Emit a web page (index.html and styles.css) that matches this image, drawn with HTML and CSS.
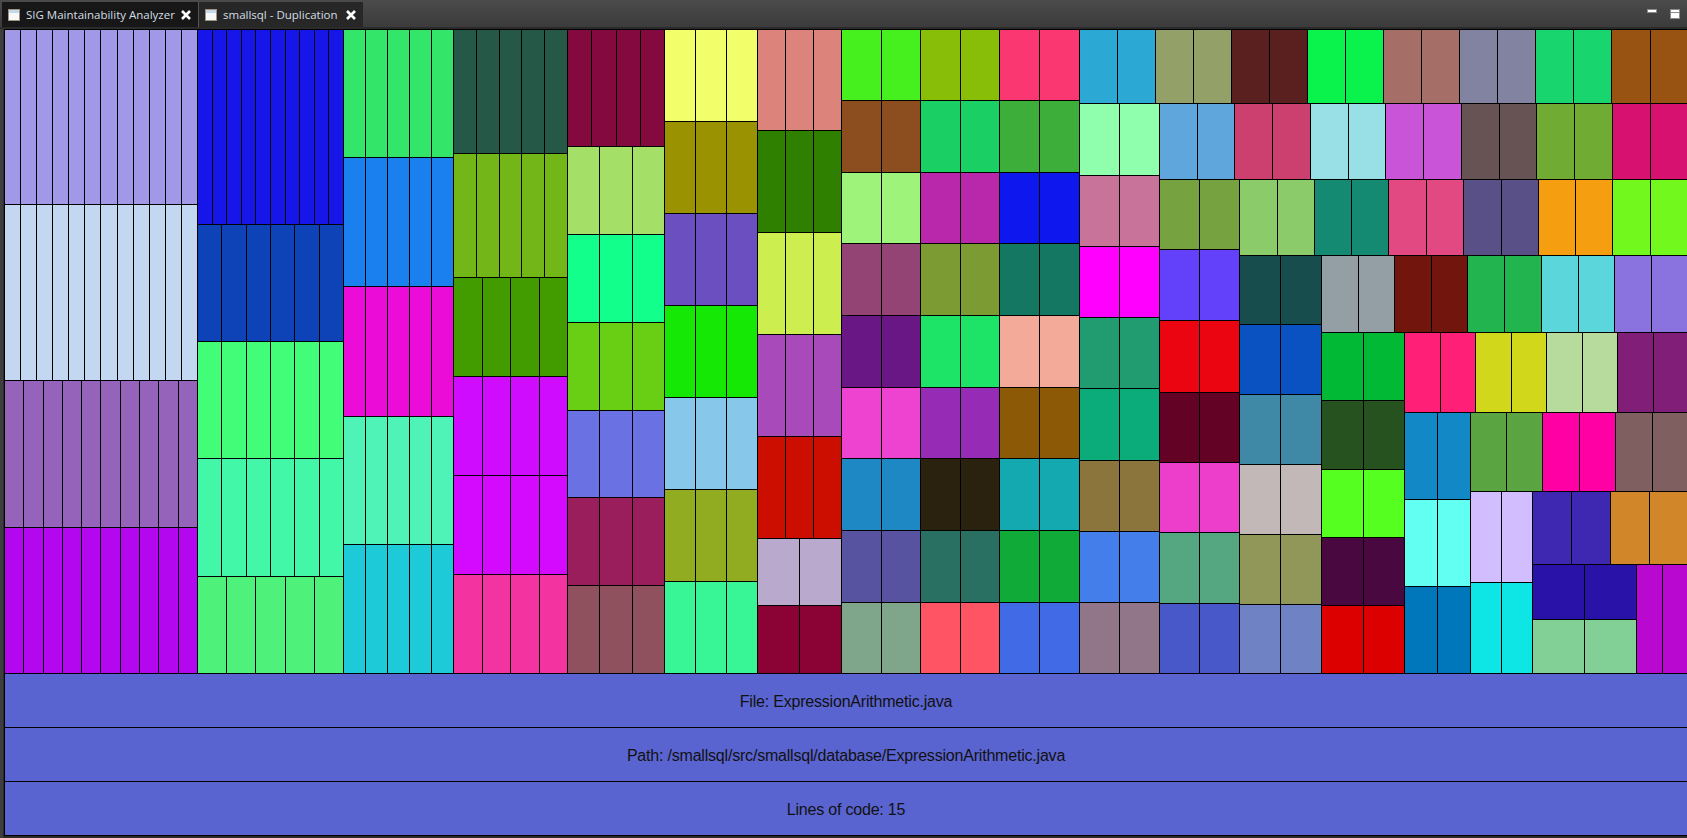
FILE: index.html
```html
<!DOCTYPE html>
<html lang="en">
<head>
  <meta charset="UTF-8">
  <title>smallsql - Duplication</title>
  <link rel="stylesheet" href="styles.css">
</head>
<body>

  <div class="tabbar">
    <div class="tab tab-first">
      <svg class="tab-icon" viewBox="0 0 12 12"><rect x="0" y="0" width="12" height="12" fill="#a0957c"/><rect x="1" y="1" width="10" height="3" fill="#c4d9ee"/><rect x="1" y="4" width="10" height="7" fill="#f6f8fa"/></svg>
      <span class="tab-title">SIG Maintainability Analyzer</span>
      <svg class="tab-close" viewBox="0 0 10 10"><path d="M1 1 L9 9 M9 1 L1 9" stroke="#fff" stroke-width="2.6"/></svg>
    </div>
    <div class="tab tab-second">
      <svg class="tab-icon" viewBox="0 0 12 12"><rect x="0" y="0" width="12" height="12" fill="#a0957c"/><rect x="1" y="1" width="10" height="3" fill="#c4d9ee"/><rect x="1" y="4" width="10" height="7" fill="#f6f8fa"/></svg>
      <span class="tab-title">smallsql - Duplication</span>
      <svg class="tab-close" viewBox="0 0 10 10"><path d="M1 1 L9 9 M9 1 L1 9" stroke="#fff" stroke-width="2.6"/></svg>
    </div>
    <div class="window-buttons">
      <span class="btn-min"></span>
      <span class="btn-max"></span>
    </div>
  </div>

  <div class="content">
    <div id="treemap" class="treemap"></div>
    <div class="info">
      <div class="info-row">File: ExpressionArithmetic.java</div>
      <div class="info-row">Path: /smallsql/src/smallsql/database/ExpressionArithmetic.java</div>
      <div class="info-row">Lines of code: 15</div>
    </div>
  </div>

  <script src="treemap.js"></script>
</body>
</html>
```

FILE: styles.css
```css
html, body {
  margin: 0;
  height: 100%;
  overflow: hidden;
  background-color: #2b2b2b;
}

.tabbar {
  display: flex;
  align-items: flex-start;
  box-sizing: border-box;
  height: 29px;
  padding: 2px 0 0 2px;
  border-bottom: 2px solid #2b2b2b;
  background: linear-gradient(#4b4b4b, #3b3b3b);
}

.tab {
  display: flex;
  align-items: center;
  box-sizing: border-box;
  height: 25px;
  padding: 0 7px 0 6px;
  font-family: "Open Sans", sans-serif;
  font-size: 11.5px;
  color: #d4dde4;
}

.tab-first {
  width: 197px;
  background-color: #171717;
  border-right: 1px solid #555;
}

.tab-second {
  width: 164px;
  background-color: #272727;
}

.tab-icon {
  width: 12px;
  height: 12px;
  margin-right: 6px;
  flex: none;
}

.tab-title {
  white-space: nowrap;
}

.tab-close {
  width: 10px;
  height: 10px;
  margin-left: auto;
  flex: none;
}

.window-buttons {
  display: flex;
  align-items: flex-start;
  gap: 13px;
  margin-left: auto;
  padding: 7px 7px 0 0;
}

.btn-min {
  box-sizing: border-box;
  width: 10px;
  height: 4px;
  background-color: #fff;
  border: 1px solid #8a8a8a;
}

.btn-max {
  box-sizing: border-box;
  width: 10px;
  height: 10px;
  background: linear-gradient(#fff 2px, #8a8a8a 2px, #8a8a8a 3px, #fff 3px);
  border: 1px solid #8a8a8a;
}

.content {
  box-sizing: border-box;
  padding-left: 1px;
  border-left: 3px solid #3e3e3e;
  height: 809px;
}

.treemap {
  display: flex;
  height: 644px;
  margin-right: -1px;
  border-top: 1px solid #000;
  border-left: 1px solid #000;
}

.node {
  display: flex;
  flex: none;
}

.row {
  flex-direction: row;
}

.col {
  flex-direction: column;
}

.cell {
  flex: 1 1 0;
  min-width: 0;
  border-right: 1px solid #000;
  border-bottom: 1px solid #000;
}

.info {
  border-left: 1px solid #000;
}

.info-row {
  display: flex;
  align-items: center;
  justify-content: center;
  box-sizing: border-box;
  height: 54px;
  padding-top: 2px;
  background-color: #5a64d0;
  border-bottom: 1px solid #000;
  font-family: "Liberation Sans", Arial, sans-serif;
  font-size: 16px;
  letter-spacing: -0.2px;
  color: #111;
}
```

FILE: treemap.js
```js
// [size, cells, colour] is a block, ["row"|"col", size, kids] is a group
const tree = [
  ["col", 193, [[175, 12, "#a298e8"], [176, 12, "#c3d7f0"], [147, 10, "#9663bb"], [146, 10, "#b207ef"]]],
  ["col", 146, [[195, 10, "#1616e8"], [117, 6, "#0e43b8"], [117, 6, "#42fd78"], [118, 6, "#43f7a8"], [97, 5, "#4ef17a"]]],
  ["col", 110, [[128, 5, "#33e568"], [129, 5, "#1a80ef"], [130, 5, "#ec0cd8"], [128, 5, "#4ff3b8"], [129, 5, "#1ccad8"]]],
  ["col", 114, [[124, 5, "#265848"], [124, 5, "#72b618"], [99, 4, "#429c00"], [99, 4, "#d00cff"], [99, 4, "#d40aff"], [99, 4, "#f3339f"]]],
  ["col", 97, [[117, 4, "#84093e"], [88, 3, "#a4e068"], [88, 3, "#12ff8c"], [88, 3, "#69cf14"], [87, 3, "#6a72e3"], [88, 3, "#9a1e5c"], [88, 3, "#90515e"]]],
  ["col", 93, [[92, 3, "#f2ff6b"], [92, 3, "#9a9200"], [92, 3, "#6b4fc0"], [92, 3, "#14e804"], [92, 3, "#87c7ea"], [92, 3, "#91ac20"], [92, 3, "#38f595"]]],
  ["col", 84, [[101, 3, "#dc847c"], [102, 3, "#2f8000"], [102, 3, "#ccee4e"], [102, 3, "#a94abb"], [102, 3, "#cc0e00"], [67, 2, "#b9a9cd"], [68, 2, "#8a0334"]]],
  ["col", 79, [[71, 2, "#46f01f"], [72, 2, "#8d4e1f"], [71, 2, "#9ef47a"], [72, 2, "#944474"], [72, 2, "#691785"], [71, 2, "#ee42d0"], [72, 2, "#1e88c4"], [72, 2, "#5753a1"], [71, 2, "#7fa58a"]]],
  ["col", 79, [[71, 2, "#88bd08"], [72, 2, "#1ad064"], [71, 2, "#b927ab"], [72, 2, "#7c9c33"], [72, 2, "#1de466"], [71, 2, "#962bb6"], [72, 2, "#2a220e"], [72, 2, "#2a7062"], [71, 2, "#ff5463"]]],
  ["col", 80, [[71, 2, "#fa3771"], [72, 2, "#3eae3a"], [71, 2, "#0e18ee"], [72, 2, "#147762"], [72, 2, "#f3aa98"], [71, 2, "#8c5906"], [72, 2, "#14a8b0"], [72, 2, "#10aa38"], [71, 2, "#416ae6"]]],
  ["col", 609, [
    ["row", 74, [[76, 2, "#2ca8d4"], [76, 2, "#93a068"], [76, 2, "#5a2020"], [76, 2, "#0af34c"], [76, 2, "#a56f68"], [76, 2, "#8183a1"], [76, 2, "#19d56e"], [77, 2, "#985212"]]],
    ["row", 570, [
      ["col", 80, [[72, 2, "#8fffad"], [71, 2, "#c7739a"], [71, 2, "#ff00ff"], [71, 2, "#219c70"], [72, 2, "#0cab7a"], [71, 2, "#8b753c"], [71, 2, "#447eea"], [71, 2, "#907688"]]],
      ["col", 529, [
        ["row", 76, [[75, 2, "#5fa6dc"], [76, 2, "#cc4070"], [75, 2, "#98e0e6"], [76, 2, "#c954d8"], [75, 2, "#675353"], [76, 2, "#70ac33"], [76, 2, "#d61170"]]],
        ["row", 494, [
          ["col", 80, [[70, 2, "#76a340"], [71, 2, "#6341fb"], [72, 2, "#ea0511"], [70, 2, "#630224"], [70, 2, "#ec3ecb"], [71, 2, "#55a782"], [70, 2, "#4858c9"]]],
          ["col", 449, [
            ["row", 76, [[75, 2, "#8bcb6a"], [74, 2, "#158a72"], [75, 2, "#e24881"], [75, 2, "#5a5088"], [74, 2, "#f59f10"], [76, 2, "#72f81c"]]],
            ["row", 418, [
              ["col", 82, [[69, 2, "#174d4d"], [70, 2, "#0a52c2"], [70, 2, "#3f89a6"], [70, 2, "#c2b8b8"], [70, 2, "#909758"], [69, 2, "#6f83c4"]]],
              ["col", 367, [
                ["row", 77, [[73, 2, "#939fa4"], [73, 2, "#72150c"], [74, 2, "#22b44e"], [73, 2, "#5bd6da"], [74, 2, "#8a73df"]]],
                ["row", 341, [
                  ["col", 83, [[68, 2, "#02b935"], [69, 2, "#25521f"], [68, 2, "#55ff1f"], [68, 2, "#4a0840"], [68, 2, "#dd0000"]]],
                  ["col", 284, [
                    ["row", 80, [[71, 2, "#ff1f76"], [71, 2, "#d1d81c"], [71, 2, "#b6db9c"], [71, 2, "#801e78"]]],
                    ["row", 261, [
                      ["col", 66, [[87, 2, "#1388c7"], [87, 2, "#62fff3"], [87, 2, "#0076bb"]]],
                      ["col", 218, [
                        ["row", 79, [[72, 2, "#5aa542"], [73, 2, "#ff00a5"], [73, 2, "#7f5f60"]]],
                        ["row", 182, [
                          ["col", 62, [[91, 2, "#d2bdff"], [91, 2, "#0ee6e6"]]],
                          ["col", 156, [
                            ["row", 73, [[78, 2, "#3f28b1"], [78, 2, "#d18729"]]],
                            ["row", 109, [
                              ["col", 104, [[55, 2, "#2812a7"], [54, 2, "#82d096"]]],
                              [52, 2, "#b908d0"]
                            ]]
                          ]]
                        ]]
                      ]]
                    ]]
                  ]]
                ]]
              ]]
            ]]
          ]]
        ]]
      ]]
    ]]
  ]]
];

function criarNo(item) {
  const no = document.createElement("div");

  if (typeof item[0] === "string") {
    no.className = "node " + item[0];
    no.style.flexBasis = item[1] + "px";
    item[2].forEach(function (filho) {
      no.appendChild(criarNo(filho));
    });
    return no;
  }

  no.className = "node row";
  no.style.flexBasis = item[0] + "px";
  no.style.backgroundColor = item[2];
  for (let i = 0; i < item[1]; i++) {
    const celula = document.createElement("div");
    celula.className = "cell";
    no.appendChild(celula);
  }
  return no;
}

const mapa = document.getElementById("treemap");
tree.forEach(function (item) {
  mapa.appendChild(criarNo(item));
});
```
